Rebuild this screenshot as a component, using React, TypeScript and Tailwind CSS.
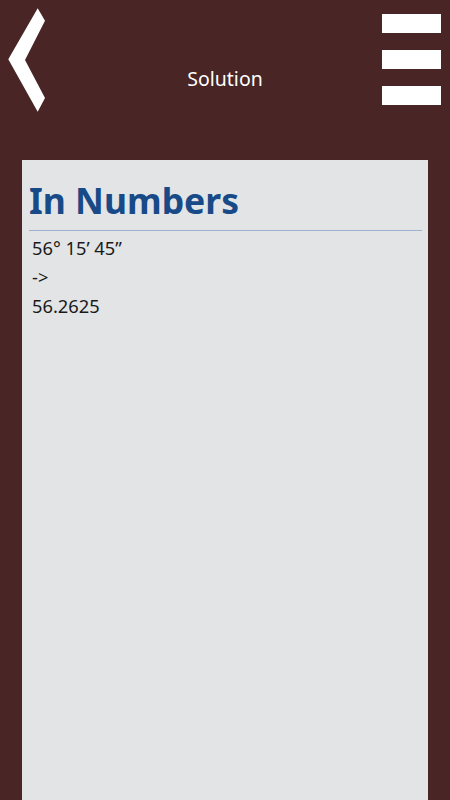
export default function App() {
    return (
        <div className="w-[450px] h-[800px] bg-[#4a2525] flex flex-col overflow-hidden font-['Noto_Sans',sans-serif]">
            <div className="relative h-[160px] shrink-0">
                <svg className="absolute left-0 top-0" width="50" height="120" viewBox="0 0 50 120">
                    <polygon points="37.7,8.3 45,20.7 25,60 45,98 37.7,111.7 8.3,59.3" fill="#ffffff" />
                </svg>
                <div className="absolute left-0 right-0 top-[64px] text-center text-white text-[19.5px] leading-[30px]">Solution</div>
                <div className="absolute left-[382px] top-[14px] flex flex-col gap-[17px]">
                    <div className="w-[59px] h-[19px] bg-white" />
                    <div className="w-[59px] h-[19px] bg-white" />
                    <div className="w-[59px] h-[19px] bg-white" />
                </div>
            </div>
            <div className="mx-[22px] flex-1 bg-[#e2e4e6] px-[7px] pt-[10px]">
                <h1 className="text-[35.5px] leading-[60px] font-bold text-[#184a88]">In Numbers</h1>
                <div className="h-px bg-[#9db1d3] mr-[-1px]" />
                <div className="pl-[3px] pt-[2px] text-[18.3px] leading-[29px] text-[#1a1a1a]">
                    <div>56° 15’ 45”</div>
                    <div>-&gt;</div>
                    <div>56.2625</div>
                </div>
            </div>
        </div>
    )
}
